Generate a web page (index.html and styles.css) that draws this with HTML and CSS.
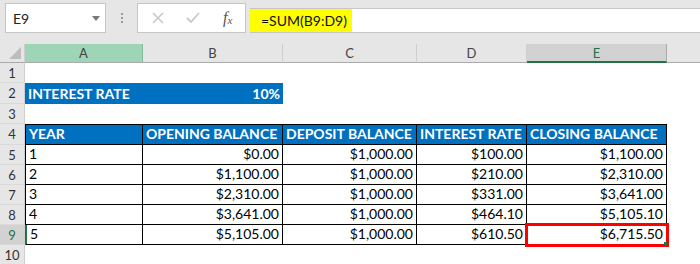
FILE: index.html
```html
<!DOCTYPE html>
<html lang="en">
<head>
  <meta charset="UTF-8" />
  <title>Interest Schedule</title>
  <link rel="stylesheet" href="styles.css">
</head>
<body>

  <div class="topbar">
    <div class="namebox">
      <span class="cellref">E9</span>
      <span class="drop"></span>
    </div>
    <div class="grip">
      <span></span><span></span><span></span>
    </div>
    <div class="fxbox">
      <svg class="ico" width="14" height="14" viewBox="0 0 14 14"><path d="M2 2 L12 12 M12 2 L2 12" stroke="#c8c8c8" stroke-width="1.6" fill="none"/></svg>
      <svg class="ico" width="16" height="14" viewBox="0 0 16 14"><path d="M2 7 L6 11 L14 2" stroke="#c8c8c8" stroke-width="1.8" fill="none"/></svg>
      <span class="fx">f<sub>x</sub></span>
    </div>
    <div class="formula">
      <span class="formula-text">=SUM(B9:D9)</span>
    </div>
  </div>

  <table class="sheet">
    <colgroup>
      <col class="w-rh"><col class="w-a"><col class="w-b"><col class="w-c"><col class="w-d"><col class="w-e"><col>
    </colgroup>
    <thead>
      <tr class="colhead">
        <th class="corner"><span class="tri"></span></th>
        <th class="sel-a">A</th>
        <th>B</th>
        <th>C</th>
        <th>D</th>
        <th class="sel-e">E</th>
        <th class="rest"></th>
      </tr>
    </thead>
    <tbody>
      <tr class="h20"><th class="rh">1</th><td colspan="6"></td></tr>
      <tr class="h21">
        <th class="rh">2</th>
        <td class="rate">INTEREST RATE</td>
        <td class="rate num">10%</td>
        <td colspan="4"></td>
      </tr>
      <tr class="h20"><th class="rh">3</th><td colspan="6"></td></tr>
      <tr class="h21 tbl head">
        <th class="rh">4</th>
        <td class="first">YEAR</td>
        <td>OPENING BALANCE</td>
        <td>DEPOSIT BALANCE</td>
        <td>INTEREST RATE</td>
        <td>CLOSING BALANCE</td>
        <td class="out"></td>
      </tr>
      <tr class="h20 tbl">
        <th class="rh">5</th>
        <td class="first">1</td><td class="num">$0.00</td><td class="num">$1,000.00</td><td class="num">$100.00</td><td class="num">$1,100.00</td><td class="out"></td>
      </tr>
      <tr class="h20 tbl">
        <th class="rh">6</th>
        <td class="first">2</td><td class="num">$1,100.00</td><td class="num">$1,000.00</td><td class="num">$210.00</td><td class="num">$2,310.00</td><td class="out"></td>
      </tr>
      <tr class="h20 tbl">
        <th class="rh">7</th>
        <td class="first">3</td><td class="num">$2,310.00</td><td class="num">$1,000.00</td><td class="num">$331.00</td><td class="num">$3,641.00</td><td class="out"></td>
      </tr>
      <tr class="h20 tbl">
        <th class="rh">8</th>
        <td class="first">4</td><td class="num">$3,641.00</td><td class="num">$1,000.00</td><td class="num">$464.10</td><td class="num">$5,105.10</td><td class="out"></td>
      </tr>
      <tr class="h20 tbl">
        <th class="rh active">9</th>
        <td class="first">5</td><td class="num">$5,105.00</td><td class="num">$1,000.00</td><td class="num">$610.50</td>
        <td class="num picked">$6,715.50<span class="handle"></span></td><td class="out"></td>
      </tr>
      <tr class="h20"><th class="rh">10</th><td colspan="6"></td></tr>
    </tbody>
  </table>

</body>
</html>
```

FILE: styles.css
```css
:root {
  --chrome: #e6e6e6;
  --line: #c6c6c6;
  --xl-green: #217346;
  --blue: #0070c0;
}

body {
  margin: 0;
  font-family: 'Lato', 'Liberation Sans', sans-serif;
  background: #fff;
  color: #000;
  overflow: hidden;
}

/* formula bar */
.topbar {
  height: 44px;
  background: var(--chrome);
  display: flex;
  align-items: flex-start;
  padding-left: 5px;
  box-sizing: border-box;
}

.namebox {
  margin-top: 3px;
  width: 101px;
  height: 30px;
  background: #fff;
  border: 1px solid var(--line);
  box-sizing: border-box;
  display: flex;
  align-items: center;
  justify-content: space-between;
  padding: 0 5px 0 7px;
  font-size: 14px;
  color: #222;
}

.drop {
  width: 0;
  height: 0;
  border-left: 4px solid transparent;
  border-right: 4px solid transparent;
  border-top: 5px solid #777;
}

.grip {
  width: 31px;
  height: 30px;
  margin-top: 3px;
  display: flex;
  flex-direction: column;
  align-items: center;
  justify-content: center;
  gap: 2px;
}

.grip span {
  width: 2px;
  height: 2px;
  background: #9a9a9a;
}

.fxbox {
  margin-top: 3px;
  width: 109px;
  height: 30px;
  background: #fff;
  border: 1px solid var(--line);
  box-sizing: border-box;
  display: flex;
  align-items: center;
  padding-left: 13px;
  gap: 20px;
}

.fx {
  font-family: 'Liberation Serif', serif;
  font-style: italic;
  font-size: 16px;
  color: #555;
  margin-left: 2px;
}

.fx sub {
  font-size: 11px;
  vertical-align: -1px;
}

.formula {
  margin-top: 8px;
  margin-left: 4px;
  flex: 1;
  height: 25px;
  background: #fff;
  border-top: 1px solid var(--line);
  border-bottom: 1px solid var(--line);
  box-sizing: border-box;
  display: flex;
}

.formula-text {
  background: #ffff00;
  width: 102px;
  box-sizing: border-box;
  padding-left: 11px;
  font-size: 14px;
  line-height: 23px;
  color: #111;
}

/* grid */
.sheet {
  border-collapse: separate;
  border-spacing: 0;
  table-layout: fixed;
  width: 700px;
  font-size: 14px;
}

.w-rh { width: 25px; }
.w-a { width: 118px; }
.w-b { width: 140px; }
.w-c { width: 134px; }
.w-d { width: 110px; }
.w-e { width: 140px; }

.sheet td,
.sheet th {
  padding: 0 3px 2px;
  vertical-align: bottom;
  white-space: nowrap;
  overflow: hidden;
}

.colhead { height: 19px; }

.colhead th {
  background: var(--chrome);
  font-weight: normal;
  font-size: 13px;
  color: #444;
  border-right: 1px solid #cfcfcf;
  border-bottom: 1px solid #ababab;
  vertical-align: middle;
  padding: 0;
}

.colhead .corner {
  position: relative;
  border-right: 1px solid #cfcfcf;
}

.tri {
  position: absolute;
  right: 3px;
  bottom: 3px;
  width: 0;
  height: 0;
  border-left: 12px solid transparent;
  border-bottom: 12px solid #bdbdbd;
}

.colhead .sel-a {
  background: #9fd5b7;
  border-right-color: #8ab89d;
}

.colhead .sel-e {
  background: #d2d2d2;
  color: var(--xl-green);
  border-bottom: 2px solid var(--xl-green);
  border-right: 1px solid #ababab;
}

.colhead .rest { border-right: none; }

.h20 { height: 20px; }
.h21 { height: 21px; }

.rh {
  background: var(--chrome);
  font-weight: normal;
  font-size: 13px;
  color: #333;
  text-align: center;
  border-right: 1px solid #cfcfcf;
  border-bottom: 1px solid #dadada;
  padding: 0 !important;
  vertical-align: middle !important;
}

.rh.active {
  background: #d2d2d2;
  color: var(--xl-green);
}

.rate {
  background: var(--blue);
  color: #fff;
  font-weight: bold;
}

.num { text-align: right; }

.tbl td {
  border-right: 1px solid #000;
  border-bottom: 1px solid #000;
}

.tbl td.first { border-left: 1px solid #000; }
.tbl.head td { border-top: 1px solid #000; }

.tbl td.out {
  border: none;
  background: #fff;
}

.tbl.head td {
  background: var(--blue);
  color: #fff;
  font-weight: bold;
}

.tbl.head td.out { background: #fff; }

.tbl .first { padding-left: 3px; }

.rh.active + td.first { border-left: 2px solid var(--xl-green); }

.picked {
  position: relative;
  overflow: visible !important;
  outline: 3px solid #f00;
  outline-offset: -1px;
}

.handle {
  position: absolute;
  right: -1px;
  bottom: -1px;
  width: 3px;
  height: 3px;
  background: var(--xl-green);
}
```
